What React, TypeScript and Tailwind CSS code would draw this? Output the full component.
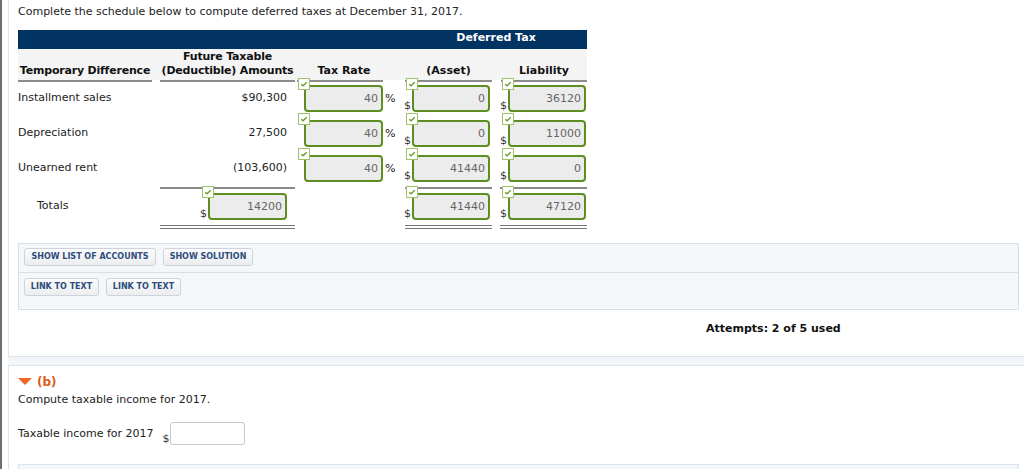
import React from "react";

function Check({ className = "" }: { className?: string }) {
  return (
    <svg
      className={className}
      width="12"
      height="12"
      viewBox="0 0 12 12"
      aria-hidden="true"
    >
      <rect x="0.5" y="0.5" width="11" height="11" fill="#ffffff" stroke="#9cc26a" />
      <path d="M3.2 6.2 L5 7.8 L8.8 4.2" fill="none" stroke="#6b9e2e" strokeWidth="1.4" />
    </svg>
  );
}

function Box({ value, w = "w-[78px]" }: { value: string; w?: string }) {
  return (
    <div
      className={`relative flex h-[27px] ${w} items-center justify-end rounded-[4px] border-2 border-[#5e8e22] bg-[#ececec] pr-[3px] text-[#666]`}
    >
      {value}
      <Check className="absolute -left-[8px] -top-[9px]" />
    </div>
  );
}

function Dollar({ children }: { children: React.ReactNode }) {
  return (
    <div className="flex items-end">
      <span className="w-[8px] leading-[12px] text-[#333]">$</span>
      {children}
    </div>
  );
}

function Row({
  label,
  amount,
  asset,
  liability,
}: {
  label: string;
  amount: string;
  asset: string;
  liability: string;
}) {
  return (
    <div className="flex h-[35px] items-start">
      <div className="w-[142px] pt-[9px]">{label}</div>
      <div className="w-[135px] pr-[8px] pt-[9px] text-right">{amount}</div>
      <div className="flex w-[109px] items-center pl-[9px] pt-[3px]">
        <Box value="40" w="w-[79px]" />
        <span className="ml-[2px]">%</span>
      </div>
      <div className="w-[96px] pt-[3px]">
        <Dollar>
          <Box value={asset} />
        </Dollar>
      </div>
      <div className="pt-[3px]">
        <Dollar>
          <Box value={liability} />
        </Dollar>
      </div>
    </div>
  );
}

function Btn({ children, w }: { children: React.ReactNode; w: string }) {
  return (
    <div
      className={`flex h-[18px] ${w} items-center justify-center whitespace-nowrap rounded-[3px] border border-[#cdd3da] bg-gradient-to-b from-[#fbfbfb] to-[#ebedef] text-[8px] font-bold leading-none text-[#2e4c7c]`}
    >
      {children}
    </div>
  );
}

export default function App() {
  return (
    <div className="h-[469px] w-[1024px] overflow-hidden border-l-2 border-[#6d6d6d] bg-white font-['DejaVu_Sans',sans-serif] text-[11px] leading-[14px] text-[#222]">
      {/* Part (a) panel */}
      <div className="ml-[6px] h-[357px] border-b border-l border-[#dde3ea] pl-[9px] pt-[5px]">
        <p>Complete the schedule below to compute deferred taxes at December 31, 2017.</p>

        <div className="mt-[11px] w-[569px]">
          {/* navy bar */}
          <div className="flex h-[19px] bg-[#023463] pt-[1px] font-bold text-white">
            <div className="ml-[387px] w-[182px] text-center">Deferred Tax</div>
          </div>
          {/* header row */}
          <div className="flex h-[31px] whitespace-nowrap bg-[#f4f4f4] font-bold text-[#111]">
            <div className="flex w-[134px] flex-col items-center justify-end pb-[2px] tracking-[-0.2px]">Temporary Difference</div>
            <div className="ml-[8px] flex w-[135px] flex-col items-center justify-end pb-[2px] tracking-[-0.2px]">
              <span>Future Taxable</span>
              <span>(Deductible) Amounts</span>
            </div>
            <div className="ml-[2px] flex w-[86px] flex-col items-center justify-end pb-[2px] pl-[8px]">Tax Rate</div>
            <div className="ml-[22px] flex w-[87px] flex-col items-center justify-end pb-[2px]">(Asset)</div>
            <div className="ml-[9px] flex w-[86px] flex-col items-center justify-end pb-[2px]">Liability</div>
          </div>
          {/* underlines */}
          <div className="flex h-[2px]">
            <div className="w-[134px] bg-[#8c8c8c]" />
            <div className="ml-[8px] w-[135px] bg-[#8c8c8c]" />
            <div className="ml-[2px] w-[86px] bg-[#8c8c8c]" />
            <div className="ml-[22px] w-[87px] bg-[#8c8c8c]" />
            <div className="ml-[9px] w-[86px] bg-[#8c8c8c]" />
          </div>

          <Row label="Installment sales" amount="$90,300" asset="0" liability="36120" />
          <Row label="Depreciation" amount="27,500" asset="0" liability="11000" />
          <Row label="Unearned rent" amount="(103,600)" asset="41440" liability="0" />

          {/* totals top line */}
          <div className="flex h-[2px]">
            <div className="ml-[142px] w-[135px] bg-[#8a8a8a]" />
            <div className="ml-[110px] w-[87px] bg-[#8a8a8a]" />
            <div className="ml-[8px] w-[87px] bg-[#8a8a8a]" />
          </div>

          {/* totals row */}
          <div className="flex h-[34px] items-start">
            <div className="w-[142px] pl-[19px] pt-[10px]">Totals</div>
            <div className="flex w-[135px] justify-end pr-[8px] pt-[4px]">
              <Dollar>
                <Box value="14200" w="w-[79px]" />
              </Dollar>
            </div>
            <div className="w-[109px]" />
            <div className="w-[96px] pt-[4px]">
              <Dollar>
                <Box value="41440" />
              </Dollar>
            </div>
            <div className="pt-[4px]">
              <Dollar>
                <Box value="47120" />
              </Dollar>
            </div>
          </div>

          {/* double lines */}
          <div className="mt-[2px] flex h-[4px]">
            <div className="ml-[142px] w-[135px] border-y border-[#777]" />
            <div className="ml-[110px] w-[87px] border-y border-[#777]" />
            <div className="ml-[8px] w-[87px] border-y border-[#777]" />
          </div>
        </div>

        {/* button box */}
        <div className="mt-[14px] w-[1001px] border border-[#d9dfe6] bg-[#f4f7fa]">
          <div className="flex h-[29px] gap-[7px] border-b border-[#d9dfe6] pl-[5px] pt-[4px]">
            <Btn w="w-[132px]">SHOW LIST OF ACCOUNTS</Btn>
            <Btn w="w-[90px]">SHOW SOLUTION</Btn>
          </div>
          <div className="flex gap-[7px] pb-[13px] pl-[5px] pt-[5px]">
            <Btn w="w-[75px]">LINK TO TEXT</Btn>
            <Btn w="w-[75px]">LINK TO TEXT</Btn>
          </div>
        </div>

        <div className="ml-[688px] mt-[12px] font-bold text-[#111]">Attempts: 2 of 5 used</div>
      </div>

      {/* strip between panels */}
      <div className="ml-[6px] h-[8px] bg-[#f3f6f9]" />

      {/* Part (b) panel */}
      <div className="ml-[6px] h-[200px] border-l border-t border-[#dde3ea] pl-[9px] pt-[9px]">
        <div className="flex items-center">
          <svg width="14" height="8" viewBox="0 0 14 8" aria-hidden="true">
            <polygon points="0,0 14,0 7,7" fill="#f26522" />
          </svg>
          <span className="ml-[5px] text-[12px] font-bold text-[#e05a1a]">(b)</span>
        </div>
        <p className="mt-[4px]">Compute taxable income for 2017.</p>
        <div className="mt-[15px] flex items-center">
          <span>Taxable income for 2017</span>
          <div className="ml-[9px] flex items-end">
            <span className="w-[7px] leading-[12px] text-[#333]">$</span>
            <div className="h-[23px] w-[75px] rounded-[3px] border border-[#c8c8c8] bg-white" />
          </div>
        </div>
        <div className="mt-[19px] h-[20px] w-[1001px] border border-[#dde3ea] bg-[#f4f7fa]" />
      </div>
    </div>
  );
}
